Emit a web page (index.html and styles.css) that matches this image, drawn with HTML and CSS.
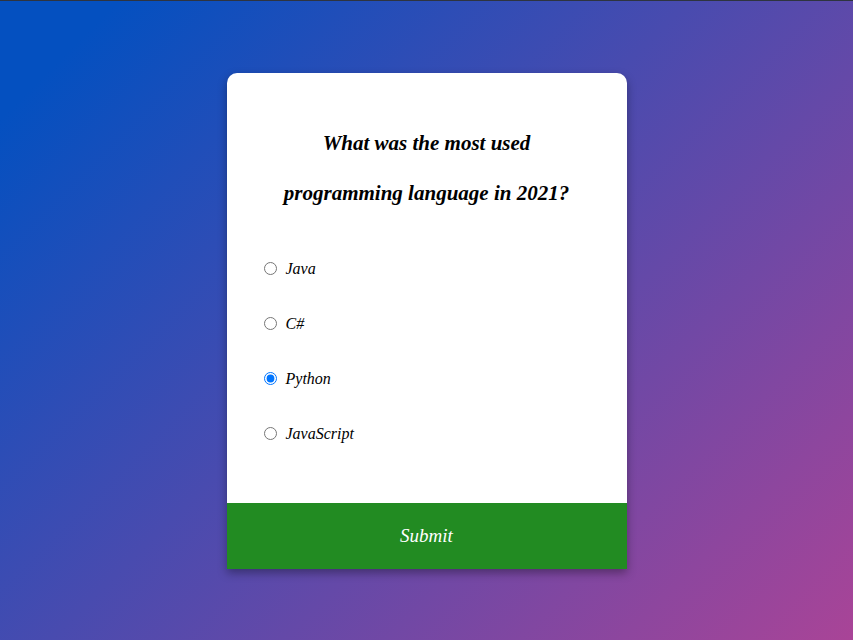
FILE: index.html
```html
<!DOCTYPE html>
<html lang="en">
<head>
<meta charset="utf-8">
<title>Quiz</title>
<link rel="stylesheet" href="styles.css">
</head>
<body>
<div class="quiz">
  <div class="quiz-header">
    <h2 class="question">What was the most used programming language in 2021?</h2>
    <ul class="answers">
      <li class="answer"><input type="radio" name="answer" id="a"><label for="a">Java</label></li>
      <li class="answer"><input type="radio" name="answer" id="b"><label for="b">C#</label></li>
      <li class="answer"><input type="radio" name="answer" id="c" checked><label for="c">Python</label></li>
      <li class="answer"><input type="radio" name="answer" id="d"><label for="d">JavaScript</label></li>
    </ul>
  </div>
  <button class="submit">Submit</button>
</div>
</body>
</html>
```
FILE: styles.css
```css
* { box-sizing: border-box; }
html, body { margin: 0; padding: 0; }
body {
  min-height: 100vh;
  border-top: 1px solid #2e3440;
  background: linear-gradient(135deg, #0450c0 8%, #a94497 100%);
  display: flex;
  align-items: center;
  justify-content: center;
  font-family: "Liberation Serif", serif;
}
.quiz {
  width: 400px;
  background: #fff;
  border-radius: 10px 10px 0 0;
  overflow: hidden;
  box-shadow: 0 4px 10px rgba(0, 0, 0, 0.35);
}
.quiz-header {
  padding: 45px 32px 42px;
}
.question {
  margin: 0 auto;
  width: 300px;
  text-align: center;
  font-size: 21px;
  line-height: 50px;
  font-style: italic;
  font-weight: bold;
  color: #000;
}
.answers {
  list-style: none;
  margin: 23px 0 0;
  padding: 0;
}
.answer {
  height: 55px;
  display: flex;
  align-items: center;
  font-size: 16px;
  font-style: italic;
  padding-top: 1px;
}
.answer input {
  margin: 0 9px 0 5px;
  width: 13px;
  height: 13px;
}
.submit {
  display: block;
  width: 100%;
  height: 66px;
  border: none;
  background: #228b22;
  color: #fff;
  font-family: "Liberation Serif", serif;
  font-style: italic;
  font-size: 19px;
  cursor: pointer;
}
```
